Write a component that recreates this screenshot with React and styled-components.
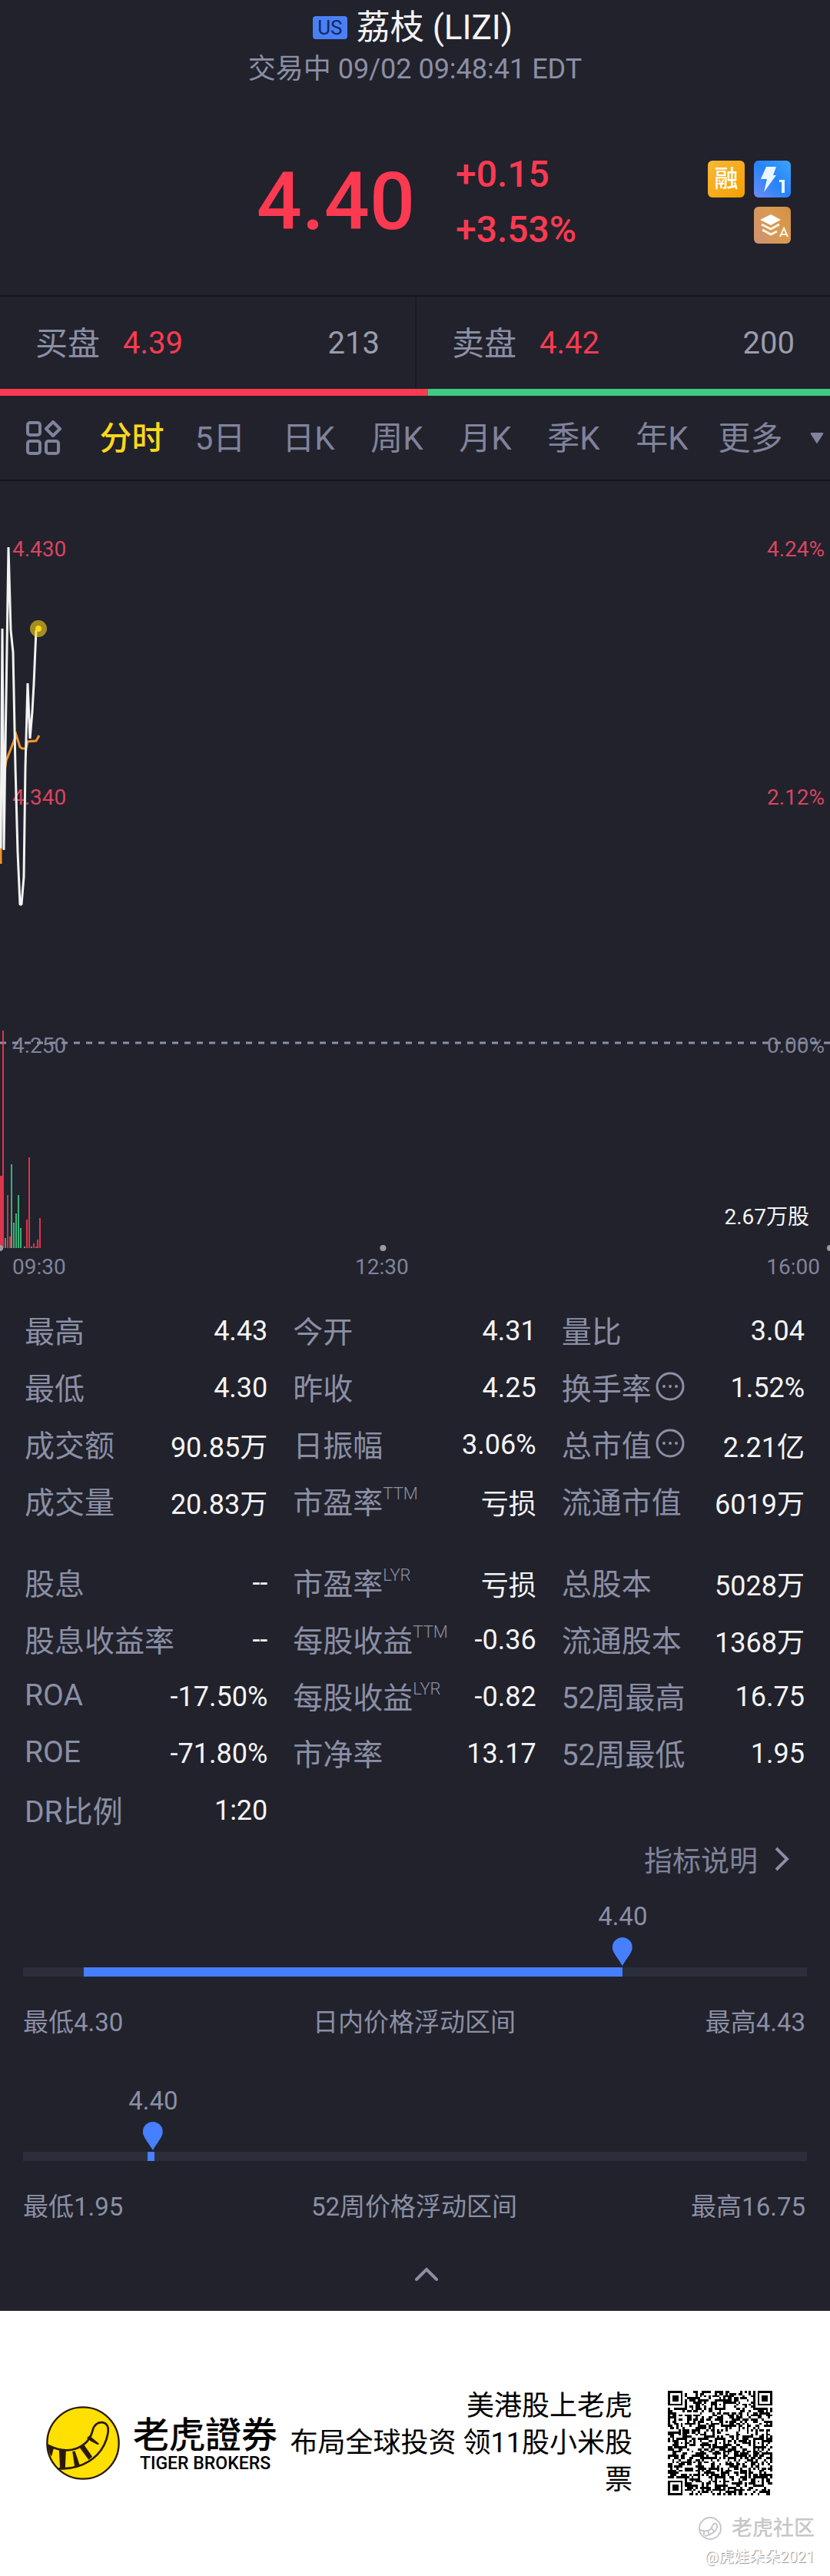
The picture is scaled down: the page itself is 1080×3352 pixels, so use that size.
import React from "react";
import styled, { createGlobalStyle } from "styled-components";

const RED = "#fb3a52";
const GREEN = "#3fca85";
const GREY = "#8b8fa6";
const BLUE = "#467fff";

// Data
const tabs = ["分时", "5日", "日K", "周K", "月K", "季K", "年K", "更多"];

const tradingStats = [
  { label: "最高", value: "4.43" },
  { label: "今开", value: "4.31" },
  { label: "量比", value: "3.04" },
  { label: "最低", value: "4.30" },
  { label: "昨收", value: "4.25" },
  { label: "换手率", value: "1.52%", info: true },
  { label: "成交额", value: "90.85万" },
  { label: "日振幅", value: "3.06%" },
  { label: "总市值", value: "2.21亿", info: true },
  { label: "成交量", value: "20.83万" },
  { label: "市盈率", sup: "TTM", value: "亏损" },
  { label: "流通市值", value: "6019万" },
];

const companyStats = [
  { label: "股息", value: "--" },
  { label: "市盈率", sup: "LYR", value: "亏损" },
  { label: "总股本", value: "5028万" },
  { label: "股息收益率", value: "--" },
  { label: "每股收益", sup: "TTM", value: "-0.36" },
  { label: "流通股本", value: "1368万" },
  { label: "ROA", value: "-17.50%" },
  { label: "每股收益", sup: "LYR", value: "-0.82" },
  { label: "52周最高", value: "16.75" },
  { label: "ROE", value: "-71.80%" },
  { label: "市净率", value: "13.17" },
  { label: "52周最低", value: "1.95" },
  { label: "DR比例", value: "1:20" },
];

// x, top, width, colour of each volume bar
const volume = [
  [0, 904, 3, RED],
  [3, 715, 2, RED],
  [6, 985, 2, "#a58b76"],
  [9, 929, 2, "#c4475a"],
  [12, 983, 2, RED],
  [14, 889, 2, GREEN],
  [17, 965, 2, GREEN],
  [20, 953, 2, GREEN],
  [23, 929, 2, GREEN],
  [26, 972, 2, GREEN],
  [31, 996, 2, GREEN],
  [34, 961, 2, RED],
  [37, 880, 2, RED],
  [40, 996, 2, "#a58b76"],
  [43, 992, 2, RED],
  [46, 996, 2, RED],
  [48, 987, 2, RED],
  [51, 959, 2, RED],
];

// QR code modules, 49 x 49
const QR_SIZE = 49;
const isFinder = (x, y) => {
  const spots = [
    [0, 0],
    [QR_SIZE - 7, 0],
    [0, QR_SIZE - 7],
  ];
  for (const [fx, fy] of spots) {
    const dx = x - fx;
    const dy = y - fy;
    if (dx >= -1 && dx <= 7 && dy >= -1 && dy <= 7) {
      const ring = Math.max(Math.abs(dx - 3), Math.abs(dy - 3));
      return ring === 3 || ring < 2 ? 1 : 0;
    }
  }
  return null;
};
const isAlignment = (x, y) => {
  const centers = [6, 24, 42];
  for (const cx of centers) {
    for (const cy of centers) {
      const ring = Math.max(Math.abs(x - cx), Math.abs(y - cy));
      if (ring <= 2) return ring === 1 ? 0 : 1;
    }
  }
  return null;
};
const qrPath = () => {
  let seed = 2021;
  let d = "";
  for (let y = 0; y < QR_SIZE; y++) {
    for (let x = 0; x < QR_SIZE; x++) {
      seed = (seed * 1103515245 + 12345) % 2147483648;
      const dark = isFinder(x, y) ?? isAlignment(x, y) ?? (seed >> 16) % 2;
      if (dark) d += `M${x} ${y}h1v1h-1z`;
    }
  }
  return d;
};

const Stat = ({ label, sup, value, info }) => (
  <StatItem>
    <StatLabel>
      {label}
      {sup && <Sup>{sup}</Sup>}
      {info && (
        <InfoButton aria-label={label}>
          <svg width="38" height="38" viewBox="0 0 38 38" fill={GREY}>
            <circle cx="19" cy="19" r="17" fill="none" stroke={GREY} strokeWidth="3" />
            <circle cx="11" cy="19" r="2" />
            <circle cx="19" cy="19" r="2" />
            <circle cx="27" cy="19" r="2" />
          </svg>
        </InfoButton>
      )}
    </StatLabel>
    <StatValue>{value}</StatValue>
  </StatItem>
);

const Range = ({ price, pin, from, to, low, title, high }) => (
  <RangeBox>
    <Track>
      <Fill style={{ left: `${from}%`, width: `${to - from}%` }} />
      <Pin style={{ left: `${pin}%` }}>
        {price}
        <svg width="26" height="37" viewBox="0 0 26 37">
          <path d="M13 0a13 13 0 0 1 13 13c0 7-8 15-13 24C8 28 0 20 0 13A13 13 0 0 1 13 0z" fill={BLUE} />
        </svg>
      </Pin>
    </Track>
    <RangeLabels>
      <span>{low}</span>
      <span>{title}</span>
      <span>{high}</span>
    </RangeLabels>
  </RangeBox>
);

export default function App() {
  return (
    <Page>
      <GlobalStyle />
      <Quote>
        <Title>
          <Market>US</Market>
          <Name>荔枝 (LIZI)</Name>
        </Title>
        <Status>交易中 09/02 09:48:41 EDT</Status>
        <PriceRow>
          <Price>4.40</Price>
          <PriceSide>
            <Changes>
              <span>+0.15</span>
              <span>+3.53%</span>
            </Changes>
            <Badges>
              <Badge $bg="linear-gradient(135deg, #f9b938, #f59f00)">
                <Margin>融</Margin>
              </Badge>
              <Badge $bg="linear-gradient(45deg, #6f8df5, #2683fa 50%, #3da4fa)">
                <svg width="48" height="48" viewBox="0 0 48 48">
                  <path d="M16 8h13l-4 11h4L13 41l4-17h-8z" fill="#eaf6ff" />
                  <path d="M33 25h7v17h-4V28h-3z" fill="#eaf6ff" />
                </svg>
              </Badge>
              <Badge $bg="linear-gradient(60deg, #cf9273, #d99a50 60%, #d39044)">
                <svg width="48" height="48" viewBox="0 0 48 48">
                  <path d="M8 17l14-7 13 7-13 7z" fill="#fff" />
                  <path d="M10 23l12 6 11-6M11 30l11 6 8-4" fill="none" stroke="#fff4e2" strokeWidth="3" />
                  <path d="M34 39l5-11 5 11M36 36h6" fill="none" stroke="#fff4e2" strokeWidth="2" />
                </svg>
              </Badge>
            </Badges>
          </PriceSide>
        </PriceRow>
      </Quote>

      <OrderBook>
        <Side>
          <SideName>买盘</SideName>
          <SidePrice>4.39</SidePrice>
          <SideSize>213</SideSize>
        </Side>
        <Side>
          <SideName>卖盘</SideName>
          <SidePrice>4.42</SidePrice>
          <SideSize>200</SideSize>
        </Side>
      </OrderBook>
      <Ratio>
        <RatioPart $color={RED} style={{ width: "51.6%" }} />
        <RatioPart $color={GREEN} style={{ width: "48.4%" }} />
      </Ratio>

      <TabBar>
        <LayoutButton aria-label="布局">
          <svg width="46" height="46" viewBox="0 0 46 46" fill="none" stroke="#80839c" strokeWidth="4">
            <rect x="2" y="3" width="16" height="16" rx="3" />
            <path d="M35 2l9 9-9 9-9-9z" strokeLinejoin="round" />
            <rect x="2" y="27" width="16" height="16" rx="3" />
            <rect x="26" y="27" width="16" height="16" rx="3" />
          </svg>
        </LayoutButton>
        <Tabs>
          {tabs.map((tab, i) => (
            <Tab key={tab} $active={i === 0}>
              {tab}
            </Tab>
          ))}
        </Tabs>
        <svg width="18" height="16" viewBox="0 0 18 16">
          <path d="M2 1h14q2 0 1 2l-7 11q-1 2-2 0L1 3q-1-2 1-2z" fill="#80839c" />
        </svg>
      </TabBar>

      <Chart>
        <Plot>
          <line x1="0" y1="731" x2="100%" y2="731" stroke={GREY} strokeWidth="3" strokeDasharray="8 8" />
          {volume.map(([x, y, w, color]) => (
            <rect key={x} x={x} y={y} width={w} height={998 - y} fill={color} opacity="0.85" />
          ))}
          <circle cx="0" cy="998" r="4" fill="#9b9ca3" />
          <circle cx="46.15%" cy="998" r="4" fill="#9b9ca3" />
          <circle cx="100%" cy="998" r="4" fill="#9b9ca3" />
          <path
            d="M1 498V400L5 384 8 364l9-23 4-11 5 16 3 2h5l2-9 11-1 4-7"
            fill="none"
            stroke="#ee9430"
            strokeWidth="3"
          />
          <path
            d="M1 478L3 192 5 480 11 86l3 108 3 29 3 149 3 110 3 69h2l3-36 2-143 3-109 3 72 3-35 2-36 3-70"
            fill="none"
            stroke="#f2f2f2"
            strokeWidth="3"
            strokeLinejoin="bevel"
          />
          <circle cx="50" cy="192" r="11" fill="#fcd71a" opacity="0.6" />
          <circle cx="50" cy="192" r="4" fill="#fcd71a" />
        </Plot>
        <AxisRow $color="#d94560">
          <span>4.430</span>
          <span>4.24%</span>
        </AxisRow>
        <AxisRow $color="#d94560">
          <span>4.340</span>
          <span>2.12%</span>
        </AxisRow>
        <AxisRow $color="#80839c">
          <span>4.250</span>
          <span>0.00%</span>
        </AxisRow>
        <VolumeLabel>2.67万股</VolumeLabel>
      </Chart>
      <Times>
        <span>09:30</span>
        <span>12:30</span>
        <span>16:00</span>
      </Times>

      <Stats>
        {tradingStats.map((s) => (
          <Stat key={s.label} {...s} />
        ))}
      </Stats>
      <Stats>
        {companyStats.map((s) => (
          <Stat key={s.label + (s.sup || "")} {...s} />
        ))}
      </Stats>
      <Help href="#">
        指标说明
        <svg width="20" height="32" viewBox="0 0 20 32" fill="none" stroke={GREY} strokeWidth="4">
          <path d="M2 2l14 14L2 30" />
        </svg>
      </Help>

      <Range price="4.40" pin={76.5} from={7.7} to={76.5} low="最低4.30" title="日内价格浮动区间" high="最高4.43" />
      <Range price="4.40" pin={16.6} from={15.9} to={16.8} low="最低1.95" title="52周价格浮动区间" high="最高16.75" />

      <Collapse aria-label="收起">
        <svg width="30" height="18" viewBox="0 0 30 18" fill="none" stroke={GREY} strokeWidth="4">
          <path d="M2 16L15 3l13 13" strokeLinecap="round" />
        </svg>
      </Collapse>

      <Footer>
        <svg width="96" height="96" viewBox="30 62 286 286">
          <circle cx="173" cy="205" r="139" fill="#ffe000" stroke="#2b1a0a" strokeWidth="7" />
          <g fill="none" stroke="#2b1a0a" strokeWidth="8" strokeLinecap="round">
            <path d="M38 214c40 20 80 24 112 11 34-14 52-34 60-68 6-24 22-34 38-32 20 3 26 20 21 45-12 64-58 108-118 126-20 6-44 10-70 8" />
          </g>
          <g fill="#2b1a0a">
            <path d="M36 210l24 13-9 34q-12-14-15-47z" />
            <path d="M80 228l27 3-3 71-20 3z" />
            <path d="M132 238l10-2 19 57-20 6z" />
            <path d="M158 220l18-10 33 48-14 12z" />
            <path d="M188 186l10-10 38 32-6 4-26-14z" />
          </g>
        </svg>
        <Brand>
          <BrandName>老虎證券</BrandName>
          <BrandLatin>TIGER BROKERS</BrandLatin>
        </Brand>
        <Slogan>
          美港股上老虎
          <br />
          布局全球投资 领11股小米股票
        </Slogan>
        <svg width="136" height="136" viewBox="0 0 49 49" shapeRendering="crispEdges">
          <path d={qrPath()} fill="#000" />
        </svg>
        <Watermark>
          <WatermarkTitle>
            <svg width="32" height="32" viewBox="0 0 32 32" fill="none" stroke="#c6c7cb" strokeWidth="2">
              <circle cx="16" cy="16" r="14" />
              <path d="M3 18c8 3 14 1 16-5 1-4 6-5 6 0 0 6-6 11-16 13M8 20v5M13 19l2 5M18 16l3 4" />
            </svg>
            老虎社区
          </WatermarkTitle>
          <span>@虎娃朵朵2021</span>
        </Watermark>
      </Footer>
    </Page>
  );
}

const GlobalStyle = createGlobalStyle`
  body {
    margin: 0;
    background: #fff;
  }
  * {
    box-sizing: border-box;
  }
  button {
    padding: 0;
    border: 0;
    background: none;
    font-family: inherit;
  }
  svg {
    display: block;
    flex: none;
  }
`;

const Page = styled.div`
  background: #21222b;
  color: #f4f4f6;
  font-family: Roboto, "Noto Sans CJK SC", sans-serif;
`;

const Quote = styled.header`
  padding-top: 10px;
  border-bottom: 2px solid #15151d;
`;

const Title = styled.div`
  display: flex;
  justify-content: center;
  align-items: center;
  gap: 12px;
  height: 52px;
  padding-right: 6px;
`;

const Market = styled.span`
  width: 45px;
  border-radius: 4px;
  background: #4a80f6;
  color: #14285c;
  font-size: 26px;
  line-height: 30px;
  text-align: center;
`;

const Name = styled.h1`
  margin: 0;
  font-size: 44px;
  font-weight: 400;
  line-height: 52px;
`;

const Status = styled.div`
  color: ${GREY};
  font-size: 36px;
  line-height: 56px;
  text-align: center;
`;

const PriceRow = styled.div`
  display: grid;
  grid-template-columns: 1fr 1fr;
  align-items: center;
  height: 266px;
  padding-top: 24px;
  color: ${RED};
  font-weight: 500;
`;

const Price = styled.div`
  font-size: 104px;
  line-height: 120px;
  text-align: right;
`;

const PriceSide = styled.div`
  display: flex;
  justify-content: space-between;
  align-items: center;
  padding: 0 51px 0 53px;
`;

const Changes = styled.div`
  display: flex;
  flex-direction: column;
  font-size: 48px;
  line-height: 72px;
`;

const Badges = styled.div`
  display: flex;
  flex-wrap: wrap;
  justify-content: flex-end;
  gap: 12px;
  width: 108px;
`;

const Badge = styled.div`
  display: flex;
  justify-content: center;
  align-items: center;
  width: 48px;
  height: 48px;
  border-radius: 6px;
  background: ${(p) => p.$bg};
`;

const Margin = styled.span`
  color: #fff;
  font-size: 31px;
  line-height: 48px;
`;

const OrderBook = styled.section`
  display: grid;
  grid-template-columns: 1fr 1fr;
`;

const Side = styled.div`
  display: flex;
  align-items: center;
  height: 120px;
  padding: 0 46px;
  font-size: 40px;

  & + & {
    border-left: 2px solid #191a22;
  }
`;

const SideName = styled.span`
  margin-right: 30px;
  padding-bottom: 6px;
  color: ${GREY};
  font-size: 42px;
`;

const SidePrice = styled.span`
  color: ${RED};
`;

const SideSize = styled.span`
  margin-left: auto;
  color: #9a9dae;
`;

const Ratio = styled.div`
  display: flex;
`;

const RatioPart = styled.div`
  height: 9px;
  background: ${(p) => p.$color};
`;

const TabBar = styled.nav`
  display: flex;
  align-items: center;
  height: 111px;
  padding: 0 8px 0 34px;
  border-bottom: 2px solid #15151d;
`;

const LayoutButton = styled.button`
  width: 80px;
`;

const Tabs = styled.div`
  display: flex;
  flex: 1;
  padding: 0 20px 6px 0;
`;

const Tab = styled.button`
  flex: 1;
  color: ${(p) => (p.$active ? "#fcd71a" : "#80839c")};
  font-size: 42px;
  font-weight: ${(p) => (p.$active ? 500 : 400)};
  white-space: nowrap;
`;

const Chart = styled.section`
  position: relative;
  display: flex;
  flex-direction: column;
  padding: 71px 7px 30px 16px;
  font-size: 28px;
  line-height: 36px;
`;

const Plot = styled.svg`
  position: absolute;
  top: 0;
  left: 0;
  width: 100%;
  height: 100%;
`;

const AxisRow = styled.div`
  display: flex;
  justify-content: space-between;
  color: ${(p) => p.$color};

  & + & {
    margin-top: 287px;
  }
`;

const VolumeLabel = styled.div`
  margin: 187px 20px 0 0;
  text-align: right;
`;

const Times = styled.div`
  display: flex;
  padding: 0 13px 0 16px;
  color: #80839c;
  font-size: 28px;
  line-height: 34px;

  span:first-child {
    flex: 5;
  }
  span:last-child {
    flex: 6;
    text-align: right;
  }
`;

const Stats = styled.dl`
  display: grid;
  grid-template-columns: repeat(3, 1fr);
  grid-auto-rows: 74px;
  column-gap: 33px;
  margin: 0;
  padding: 29px 33px 0 32px;

  & + & {
    padding-top: 32px;
  }
`;

const StatItem = styled.div`
  display: flex;
  justify-content: space-between;
  align-items: center;
  white-space: nowrap;
`;

const StatLabel = styled.dt`
  display: flex;
  align-items: center;
  padding-bottom: 4px;
  color: ${GREY};
  font-size: 39px;
`;

const Sup = styled.sup`
  align-self: flex-start;
  font-size: 22px;
  font-weight: 300;
  line-height: 40px;
`;

const InfoButton = styled.button`
  margin-left: 5px;
`;

const StatValue = styled.dd`
  margin: 0;
  font-size: 36px;
`;

const Help = styled.a`
  display: flex;
  justify-content: flex-end;
  align-items: center;
  gap: 22px;
  height: 52px;
  padding-right: 52px;
  color: #80839c;
  font-size: 37px;
  text-decoration: none;
`;

const RangeBox = styled.section`
  padding: 115px 30px 0;
  height: 240px;
  color: ${GREY};
  font-size: 33px;
`;

const Track = styled.div`
  position: relative;
  height: 12px;
  background: #2c2e3b;
`;

const Fill = styled.div`
  position: absolute;
  height: 100%;
  background: ${BLUE};
`;

const Pin = styled.div`
  position: absolute;
  bottom: 14px;
  display: flex;
  flex-direction: column;
  align-items: center;
  gap: 8px;
  line-height: 38px;
  transform: translateX(-50%);
`;

const RangeLabels = styled.div`
  display: grid;
  grid-template-columns: 1fr auto 1fr;
  margin-top: 36px;
  padding-right: 2px;
  line-height: 48px;

  span:last-child {
    text-align: right;
  }
`;

const Collapse = styled.button`
  display: flex;
  justify-content: center;
  align-items: center;
  width: 100%;
  height: 82px;
  padding: 0 0 14px 30px;
`;

const Footer = styled.footer`
  position: relative;
  display: flex;
  align-items: center;
  height: 345px;
  padding: 0 75px 2px 60px;
  background: #fff;
  color: #000;
`;

const Brand = styled.div`
  display: flex;
  flex-direction: column;
  align-items: center;
  margin-left: 17px;
  font-weight: 500;
  white-space: nowrap;
`;

const BrandName = styled.div`
  font-family: "Noto Sans CJK TC", sans-serif;
  font-size: 47px;
  line-height: 54px;
`;

const BrandLatin = styled.div`
  font-size: 23px;
  line-height: 28px;
`;

const Slogan = styled.p`
  flex: 1;
  margin: 0 46px 0 14px;
  font-size: 36px;
  line-height: 48px;
  text-align: right;
`;

const Watermark = styled.div`
  position: absolute;
  right: 20px;
  bottom: 10px;
  display: flex;
  flex-direction: column;
  align-items: flex-end;
  color: #fff;
  font-size: 20px;
  line-height: 30px;
  text-shadow: 1px 1px 1px #8f9096;
`;

const WatermarkTitle = styled.div`
  display: flex;
  align-items: center;
  gap: 12px;
  color: #c6c7cb;
  font-size: 27px;
  font-weight: 500;
  line-height: 44px;
  text-shadow: none;
`;
